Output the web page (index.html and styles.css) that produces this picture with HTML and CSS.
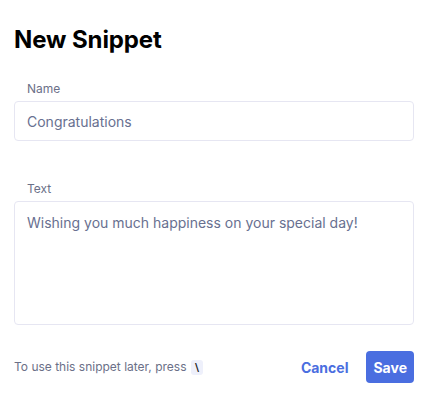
FILE: index.html
```html
<!DOCTYPE html>
<html lang="en">

<head>
    <meta charset="UTF-8">
    <meta name="viewport" content="width=device-width, initial-scale=1.0">
    <title>New Snippet</title>
    <link rel="stylesheet" href="styles.css">
</head>

<body>
    <div class="snippet-dialog">
        <h1 class="dialog-title">New Snippet</h1>

        <div class="field">
            <label class="field-label" for="name">Name</label>
            <input class="field-input" id="name" type="text" value="Congratulations">
        </div>

        <div class="field">
            <label class="field-label" for="text">Text</label>
            <textarea class="field-input field-textarea" id="text">Wishing you much happiness on your special day!</textarea>
        </div>

        <div class="dialog-footer">
            <p class="hint">To use this snippet later, press <kbd class="key">\</kbd></p>
            <div class="actions">
                <button class="btn btn-link">Cancel</button>
                <button class="btn btn-primary">Save</button>
            </div>
        </div>
    </div>
</body>

</html>
```

FILE: styles.css
```css
body {
    margin: 0;
    padding: 0;
    font-family: Inter, "Noto Sans", sans-serif;
    background: #fff;
}

.snippet-dialog {
    padding: 25px 13px 0 14px;
}

.dialog-title {
    margin: 0 0 27px;
    font-size: 24px;
    font-weight: 700;
    line-height: 29px;
    color: #000;
    letter-spacing: -0.1px;
}

.field {
    display: flex;
    flex-direction: column;
    margin-bottom: 40px;
}

.field-label {
    padding-left: 13px;
    margin-bottom: 5px;
    font-size: 12px;
    line-height: 15px;
    color: #6b7088;
}

.field-input {
    box-sizing: border-box;
    width: 400px;
    height: 40px;
    padding: 8px 12px;
    border: 1px solid #e6e6f2;
    border-radius: 4px;
    font-family: inherit;
    font-size: 14px;
    line-height: 22px;
    color: #687090;
    background: #fff;
    outline: none;
}

.field-textarea {
    height: 124px;
    padding-top: 10px;
    resize: none;
}

.dialog-footer {
    display: flex;
    align-items: center;
    justify-content: space-between;
    margin-top: -14px;
}

.hint {
    margin: 0;
    font-size: 12px;
    color: #6b7088;
}

.key {
    display: inline-block;
    padding: 0 4px;
    margin-left: 1px;
    border-radius: 3px;
    background: #eef0fb;
    font-family: "DejaVu Sans", sans-serif;
    font-size: 11px;
    font-weight: 700;
    line-height: 15px;
    color: #222;
}

.actions {
    display: flex;
    align-items: center;
    gap: 18px;
}

.btn {
    border: 0;
    font-family: inherit;
    font-size: 14px;
    font-weight: 700;
    cursor: pointer;
}

.btn-link {
    padding: 0;
    background: none;
    color: #4a6ee0;
}

.btn-primary {
    height: 32px;
    padding: 0 7px;
    border-radius: 4px;
    background: #4a6ee0;
    color: #fff;
}
```
